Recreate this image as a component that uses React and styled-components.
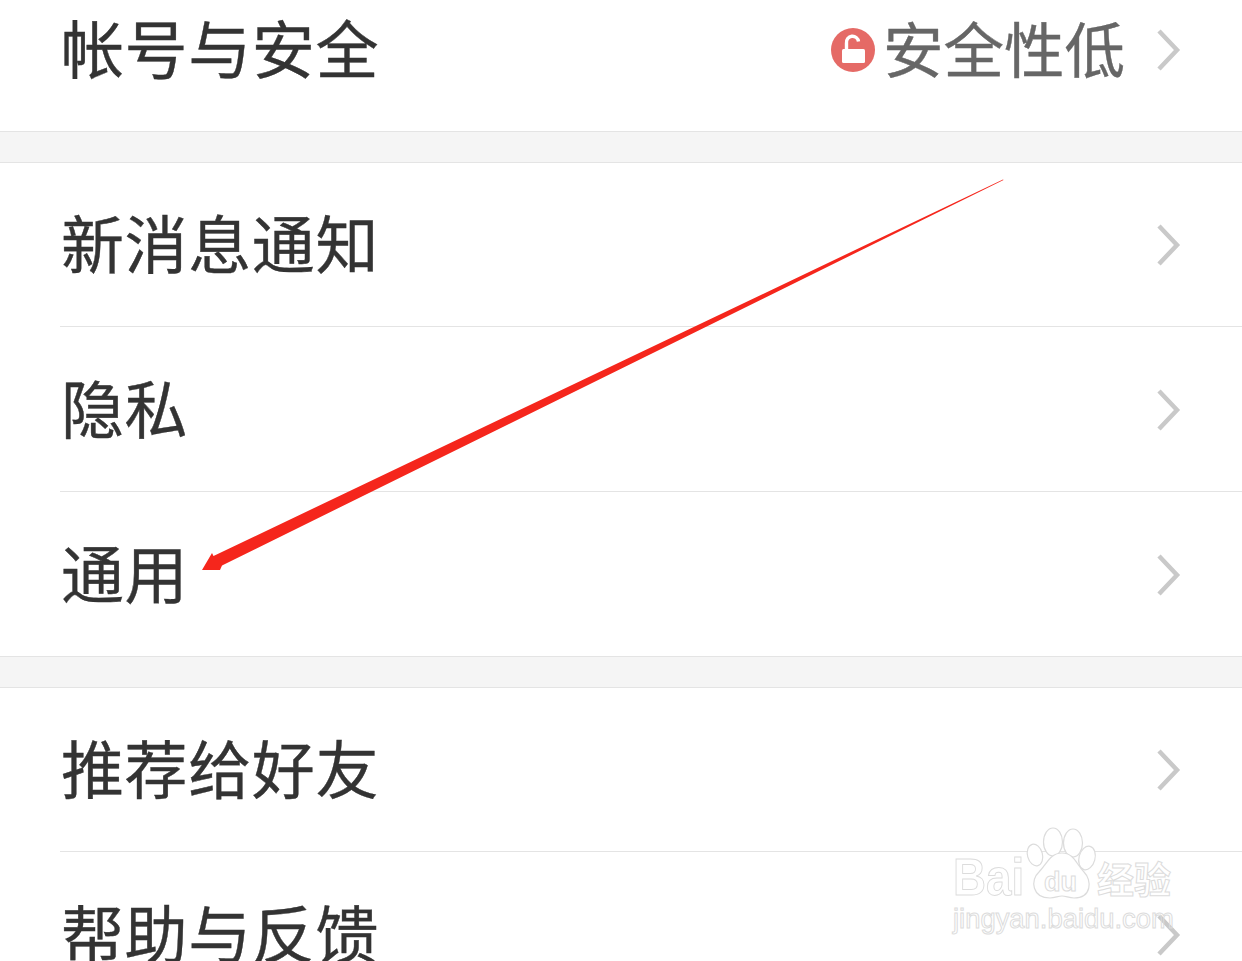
import React from "react";
import styled, { createGlobalStyle } from "styled-components";

const Global = createGlobalStyle`
  html, body { margin: 0; padding: 0; background: #fff; }
  body { font-family: "Noto Sans CJK SC", "Liberation Sans", sans-serif; }
`;

const Viewport = styled.div`
  position: relative;
  width: 1242px;
  height: 961px;
  overflow: hidden;
  background: #fff;
`;

const List = styled.div`
  display: flex;
  flex-direction: column;
  margin-top: -33px;
`;

const Gap = styled.div`
  height: 30px;
  margin-bottom: -1px;
  background: #f5f5f5;
  border-top: 1px solid #e4e4e4;
  border-bottom: 1px solid #e4e4e4;
`;

const Group = styled.section`
  display: flex;
  flex-direction: column;
`;

const Row = styled.div`
  display: flex;
  align-items: center;
  height: 164px;
  padding: 0 61px 0 61px;
  box-sizing: border-box;
  position: relative;
  & + &::before {
    content: "";
    position: absolute;
    left: 60px;
    right: 0;
    top: -1px;
    height: 1px;
    background: #e4e4e4;
  }
  & + & { margin-top: 1px; }
`;

const Label = styled.span`
  flex: 1;
  font-size: 63px;
  line-height: 1;
  padding-bottom: 8px;
  color: #333;
  letter-spacing: 0.6px;
  -webkit-text-stroke: 0.4px #333;
`;

const Status = styled.span`
  display: flex;
  align-items: center;
  gap: 8px;
  margin-right: 31px;
  margin-top: 2px;
`;

const StatusText = styled.span`
  font-size: 60.5px;
  line-height: 1;
  padding-bottom: 5px;
  color: #666;
  -webkit-text-stroke: 0.4px #666;
`;

const Chevron = styled.svg`
  width: 26px;
  height: 44px;
  flex: none;
  margin-right: -1px;
  margin-top: 2px;
`;

const Overlay = styled.svg`
  position: absolute;
  left: 0;
  top: 0;
  pointer-events: none;
`;

const Watermark = styled.div`
  position: absolute;
  left: 952px;
  top: 826px;
  width: 240px;
  height: 110px;
  pointer-events: none;
  color: #fff;
  font-family: "Liberation Sans", sans-serif;
  -webkit-text-stroke: 1px #dcdcdc;
`;

const Paw = styled.svg`
  position: absolute;
  left: 70px;
  top: 0;
`;

const MarkBrand = styled.span`
  position: absolute;
  left: 1px;
  top: 23px;
  font-size: 52px;
  font-weight: 700;
  line-height: 56px;
  transform: scaleX(0.88);
  transform-origin: left center;
`;

const MarkDu = styled.span`
  position: absolute;
  left: 92px;
  top: 38px;
  font-size: 27px;
  line-height: 36px;
  font-weight: 700;
`;

const MarkCn = styled.span`
  position: absolute;
  left: 145px;
  top: 30px;
  font-size: 37px;
  line-height: 44px;
  font-weight: 700;
  font-family: "Noto Sans CJK SC", sans-serif;
`;

const MarkUrl = styled.span`
  position: absolute;
  left: 1px;
  top: 78px;
  font-size: 27.4px;
  line-height: 30px;
  white-space: nowrap;
  color: transparent;
`;

const ChevronIcon = () => (
  <Chevron viewBox="0 0 26 44">
    <path d="M3 3 L21 22 L3 41" fill="none" stroke="#c9c9c9" strokeWidth="4.5" />
  </Chevron>
);

const LockBadge = () => (
  <svg width="44" height="44" viewBox="0 0 44 44">
    <circle cx="22" cy="22" r="22" fill="#e56a66" />
    <rect x="11" y="21" width="23" height="14" rx="1.5" fill="#fff" />
    <path d="M15.5 21 V15 a6 6 0 0 1 12 -1.5" fill="none" stroke="#fff" strokeWidth="3.4" />
  </svg>
);

const Item = ({ label, status }) => (
  <Row>
    <Label>{label}</Label>
    {status && (
      <Status>
        <LockBadge />
        <StatusText>{status}</StatusText>
      </Status>
    )}
    <ChevronIcon />
  </Row>
);

export default function App() {
  return (
    <Viewport>
      <Global />
      <List>
        <Group>
          <Item label="帐号与安全" status="安全性低" />
        </Group>
        <Gap />
        <Group>
          <Item label="新消息通知" />
          <Item label="隐私" />
          <Item label="通用" />
        </Group>
        <Gap />
        <Group>
          <Item label="推荐给好友" />
          <Item label="帮助与反馈" />
        </Group>
      </List>
      <Overlay width="1242" height="961" viewBox="0 0 1242 961">
        <path
          d="M202 570 L212 553 L213.5 556 L1003 179.5 L1003.5 180 L222 565.5 L220 570 Z"
          fill="#f5261c"
        />
      </Overlay>
      <Watermark>
        <Paw width="110" height="100" viewBox="0 0 110 100" fill="#fff" stroke="#dcdcdc" strokeWidth="1.2">
          <ellipse cx="13" cy="29" rx="7.5" ry="11" transform="rotate(-15 13 29)" />
          <ellipse cx="31" cy="16" rx="9.5" ry="14" />
          <ellipse cx="51" cy="17" rx="9.5" ry="14" />
          <ellipse cx="65" cy="32" rx="8" ry="12" transform="rotate(15 65 32)" />
          <path d="M40 27 C52 27 54 38 62 46 C70 54 70 72 52 72 C47 72 44 70 40 70 C36 70 33 72 28 72 C10 72 8 54 17 46 C25 38 28 27 40 27 Z" />
        </Paw>
        <MarkBrand>Bai</MarkBrand>
        <MarkDu>du</MarkDu>
        <MarkCn>经验</MarkCn>
        <MarkUrl>jingyan.baidu.com</MarkUrl>
      </Watermark>
    </Viewport>
  );
}
